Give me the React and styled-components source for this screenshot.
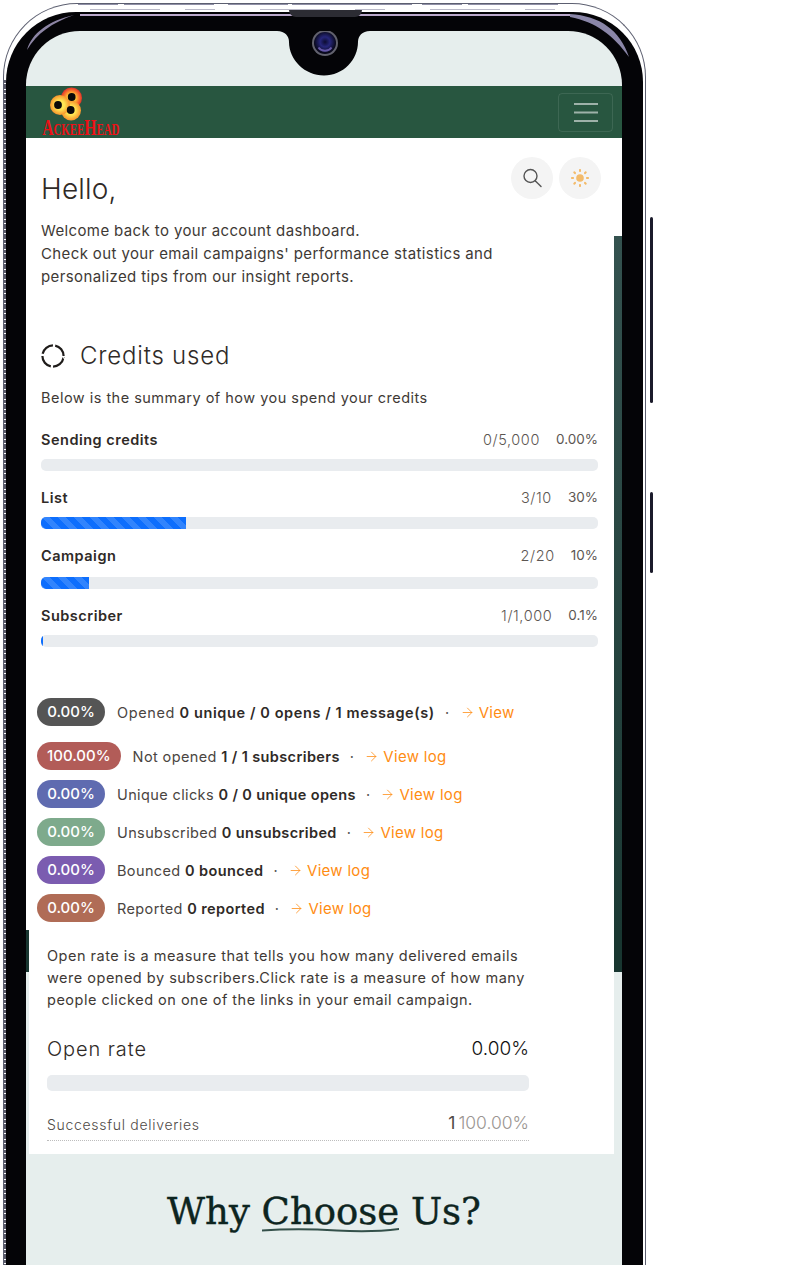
import React from "react";
import styled, { createGlobalStyle } from "styled-components";
import { ArrowRight } from "lucide-react";

const GlobalStyle = createGlobalStyle`
  html, body {
    margin: 0;
    padding: 0;
    background: #fff;
  }
  * {
    box-sizing: border-box;
  }
`;

const Page = styled.div`
  width: 800px;
  height: 1265px;
  padding: 3px 0 0 3px;
  overflow: hidden;
  background: #fff;
  font-family: Inter, "Liberation Sans", sans-serif;
  color: #2f2a27;
`;

const Shell = styled.div`
  position: relative;
  width: 643px;
  height: 1300px;
  padding: 8px 2px 0 2px;
  border: 1px solid #5c5f70;
  border-bottom: 0;
  border-radius: 74px 74px 0 0;
`;

const FrameLines = styled.svg`
  position: absolute;
  left: -1px;
  top: -1px;
  pointer-events: none;
`;

const Speaker = styled.div`
  position: absolute;
  left: 285px;
  top: 6px;
  width: 73px;
  height: 7px;
  background: #2c2c33;
  border-radius: 0 0 7px 7px;
`;

const SideButton = styled.div`
  position: absolute;
  left: 646px;
  top: ${(p) => p.$top}px;
  width: 3px;
  height: ${(p) => p.$height}px;
  background: #1b1b2b;
  border-radius: 2px;
`;

const Bezel = styled.div`
  height: 100%;
  padding: 19px 21px 0 20px;
  background: #040407;
  border-radius: 70px 70px 0 0;
`;

const Screen = styled.div`
  position: relative;
  width: 596px;
  height: 100%;
  overflow: hidden;
  background: #e6eeed;
  border-radius: 54px 54px 0 0;
`;

const Notch = styled.svg`
  position: absolute;
  left: 251px;
  top: 0;
`;

const StatusArea = styled.div`
  height: 55px;
`;

const Navbar = styled.nav`
  display: flex;
  align-items: center;
  justify-content: space-between;
  height: 52px;
  padding: 0 9px 0 15px;
  background: #285640;
`;

const Logo = styled.a`
  display: flex;
  flex-direction: column;
  align-items: center;
  width: 80px;
  height: 51px;
`;

const LogoMark = styled.svg`
  display: block;
  align-self: flex-start;
  margin-left: 9px;
  flex: none;
`;

const LogoText = styled.span`
  display: block;
  margin-top: -2px;
  font-family: "Liberation Serif", serif;
  font-size: 23px;
  line-height: 18px;
  font-weight: 700;
  font-variant: small-caps;
  color: #ee1016;
  white-space: nowrap;
  transform: scaleX(0.68);
`;

const Toggler = styled.button`
  display: flex;
  align-items: center;
  justify-content: center;
  width: 55px;
  height: 39px;
  padding: 0;
  background: transparent;
  border: 1px solid rgba(255, 255, 255, 0.1);
  border-radius: 4px;
`;

const Dashboard = styled.main`
  padding: 0 24px 8px 15px;
  background: linear-gradient(180deg, #34524f, #183630) right 98px / 8px 100% no-repeat, #fff;
`;

const Header = styled.header`
  display: flex;
  justify-content: space-between;
  padding-top: 19px;
`;

const Hello = styled.h1`
  margin: 12px 0 0;
  font-size: 28px;
  line-height: 40px;
  font-weight: 300;
  letter-spacing: 0.2px;
`;

const Actions = styled.div`
  display: flex;
  gap: 6px;
  margin-right: -3px;
`;

const RoundButton = styled.button`
  display: flex;
  align-items: center;
  justify-content: center;
  width: 42px;
  height: 42px;
  padding: 0;
  background: #f4f4f4;
  border: 0;
  border-radius: 50%;
`;

const Intro = styled.p`
  max-width: 500px;
  margin: 10px 0 0;
  font-size: 15px;
  line-height: 23px;
  letter-spacing: 0.38px;
  color: #3e3935;
`;

const SectionTitle = styled.h2`
  display: flex;
  align-items: center;
  gap: 15px;
  margin: 50px 0 0;
  font-size: 24px;
  line-height: 36px;
  font-weight: 300;
  letter-spacing: 0.8px;
`;

const Summary = styled.p`
  margin: 12px 0 20px;
  font-size: 14.5px;
  line-height: 23px;
  letter-spacing: 0.48px;
  color: #3e3935;
`;

const UsageRow = styled.div`
  margin-bottom: 16px;
`;

const UsageHead = styled.div`
  display: flex;
  align-items: center;
  height: 20px;
  margin-bottom: ${(p) => p.$gap}px;
`;

const UsageLabel = styled.strong`
  flex: 1;
  font-size: 14.5px;
  font-weight: 600;
  letter-spacing: 0.5px;
`;

const UsageCount = styled.span`
  font-size: 14.5px;
  font-weight: 300;
  letter-spacing: 0.6px;
  color: #5c5652;
`;

const UsagePercent = styled.span`
  margin-left: 16px;
  font-size: 13.5px;
  font-weight: 400;
  color: #5c5652;
`;

const Track = styled.div`
  height: ${(p) => p.$height || 12}px;
  overflow: hidden;
  background: #e9ecef;
  border-radius: 5px;
`;

const Fill = styled.div`
  height: 100%;
  background-color: #0d6efd;
  background-image: linear-gradient(
    45deg,
    rgba(255, 255, 255, 0.15) 25%,
    transparent 25%,
    transparent 50%,
    rgba(255, 255, 255, 0.15) 50%,
    rgba(255, 255, 255, 0.15) 75%,
    transparent 75%,
    transparent
  );
  background-size: 16px 16px;
`;

const Stats = styled.ul`
  display: flex;
  flex-direction: column;
  gap: 10px;
  margin: 51px 0 0 -4px;
  padding: 0;
  list-style: none;
`;

const StatRow = styled.li`
  display: flex;
  align-items: center;
  height: 28px;
  font-size: 14.5px;
  letter-spacing: 0.38px;
  color: #4a4541;
  white-space: nowrap;

  &:first-child {
    margin-bottom: 6px;
    letter-spacing: 0.6px;
  }

  b {
    font-weight: 600;
    color: #2f2a27;
  }
`;

const Badge = styled.span`
  min-width: 68px;
  height: 28px;
  margin-right: 12px;
  padding: 0 10px;
  text-align: center;
  font-size: 15px;
  line-height: 27px;
  font-weight: 500;
  letter-spacing: 0;
  color: #fff;
  background: ${(p) => p.$color};
  border-radius: 14px;
`;

const Dot = styled.span`
  margin: 0 10px;
  color: #555;
`;

const ViewLink = styled.a`
  display: inline-flex;
  align-items: center;
  gap: 4px;
  font-size: 15px;
  letter-spacing: 0.3px;
  color: #ff8c12;
`;

const NoteSection = styled.section`
  padding: 0 8px 0 3px;
  background: linear-gradient(#183630 42px, transparent 42px);
`;

const NoteCard = styled.div`
  padding: 15px 85px 13px 18px;
  background: #fff;
`;

const Note = styled.p`
  margin: 0;
  font-size: 14.5px;
  line-height: 22px;
  letter-spacing: 0.5px;
  color: #3e3935;
`;

const RateHead = styled.div`
  display: flex;
  align-items: center;
  justify-content: space-between;
  margin: 22px 0 10px;
  font-size: 20px;
  line-height: 32px;
  font-weight: 300;
  letter-spacing: 0.9px;
`;

const RateValue = styled.span`
  font-size: 19px;
  font-weight: 300;
  letter-spacing: 0;
  color: #111;
`;

const Delivery = styled.div`
  display: flex;
  justify-content: space-between;
  align-items: center;
  height: 37px;
  margin-top: 13px;
  border-bottom: 1px dotted #bdbdbd;
`;

const DeliveryLabel = styled.span`
  margin-top: 4px;
  font-size: 14px;
  font-weight: 300;
  letter-spacing: 0.7px;
  color: #4f4a46;
`;

const DeliveryValue = styled.span`
  font-size: 17.5px;
  font-weight: 300;
  color: #9a9591;

  b {
    margin-right: 3px;
    font-weight: 400;
    color: #4f4a46;
  }
`;

const WhySection = styled.section`
  padding-top: 35px;
  text-align: center;
`;

const WhyTitle = styled.h2`
  margin: 0;
  font-family: "DejaVu Serif", serif;
  font-size: 37px;
  line-height: 46px;
  font-weight: 400;
  color: #0d2420;
  -webkit-text-stroke: 0.4px #0d2420;
`;

const Underlined = styled.span`
  position: relative;
  display: inline-block;
`;

const Squiggle = styled.svg`
  position: absolute;
  left: 0;
  bottom: 2px;
  width: 100%;
  height: 5px;
`;

const usage = [
  { label: "Sending credits", count: "0/5,000", percent: "0.00%", fill: 0, gap: 10 },
  { label: "List", count: "3/10", percent: "30%", fill: 145, gap: 10 },
  { label: "Campaign", count: "2/20", percent: "10%", fill: 48, gap: 12 },
  { label: "Subscriber", count: "1/1,000", percent: "0.1%", fill: 2, gap: 10 },
];

const stats = [
  { value: "0.00%", color: "#555555", text: "Opened", bold: "0 unique / 0 opens / 1 message(s)", link: "View" },
  { value: "100.00%", color: "#b25c58", text: "Not opened", bold: "1 / 1 subscribers", link: "View log" },
  { value: "0.00%", color: "#5f6bb0", text: "Unique clicks", bold: "0 / 0 unique opens", link: "View log" },
  { value: "0.00%", color: "#7eaa8c", text: "Unsubscribed", bold: "0 unsubscribed", link: "View log" },
  { value: "0.00%", color: "#7b5cb0", text: "Bounced", bold: "0 bounced", link: "View log" },
  { value: "0.00%", color: "#b06c56", text: "Reported", bold: "0 reported", link: "View log" },
];

const sunRays = [0, 45, 90, 135, 180, 225, 270, 315];

const App = () => {
  return (
    <Page>
      <GlobalStyle />
      <Shell>
        <Bezel>
          <Screen>
            <StatusArea />
            <Navbar>
              <Logo>
                <LogoMark width="34" height="34" viewBox="0 0 34 34">
                  <defs>
                    <radialGradient id="lobeRed">
                      <stop offset="0.35" stopColor="#ffd23c" />
                      <stop offset="0.7" stopColor="#f9782c" />
                      <stop offset="1" stopColor="#e2302a" />
                    </radialGradient>
                    <radialGradient id="lobeYellow">
                      <stop offset="0.45" stopColor="#ffe653" />
                      <stop offset="1" stopColor="#f7932c" />
                    </radialGradient>
                  </defs>
                  <circle cx="21.500" cy="11" r="10.500" fill="url(#lobeRed)" />
                  <circle cx="21" cy="23.500" r="10" fill="url(#lobeYellow)" />
                  <circle cx="10" cy="18" r="10" fill="url(#lobeYellow)" />
                  <circle cx="21.700" cy="10" r="3.900" fill="#0a0a0a" />
                  <circle cx="8" cy="18" r="3.900" fill="#0a0a0a" />
                  <circle cx="20.700" cy="23" r="3.900" fill="#0a0a0a" />
                </LogoMark>
                <LogoText>AckeeHead</LogoText>
              </Logo>
              <Toggler aria-label="Menu">
                <svg width="26" height="20" viewBox="0 0 26 20">
                  <path d="M1 2h24M1 10.500h24M1 19h24" stroke="rgba(255,255,255,0.55)" strokeWidth="2" />
                </svg>
              </Toggler>
            </Navbar>
            <Dashboard>
              <Header>
                <Hello>Hello,</Hello>
                <Actions>
                  <RoundButton aria-label="Search">
                    <svg width="24" height="24" viewBox="0 0 24 24" fill="none" stroke="#555" strokeWidth="1.4">
                      <circle cx="10.500" cy="10" r="6.500" />
                      <path d="M15.200 14.700L21 20.500" strokeLinecap="round" />
                    </svg>
                  </RoundButton>
                  <RoundButton aria-label="Theme">
                    <svg width="24" height="24" viewBox="0 0 24 24">
                      <circle cx="12" cy="12" r="3.800" fill="#f3bb6b" />
                      {sunRays.map((angle) => (
                        <rect
                          key={angle}
                          x="11"
                          y="3"
                          width="2"
                          height="3"
                          rx="0.8"
                          fill="#f3bb6b"
                          transform={`rotate(${angle} 12 12)`}
                        />
                      ))}
                    </svg>
                  </RoundButton>
                </Actions>
              </Header>
              <Intro>
                Welcome back to your account dashboard.
                <br />
                Check out your email campaigns' performance statistics and personalized tips from our insight reports.
              </Intro>
              <SectionTitle>
                <svg width="24" height="24" viewBox="0 0 24 24" fill="none">
                  <circle
                    cx="12"
                    cy="12"
                    r="10.600"
                    stroke="#1f1c1a"
                    strokeWidth="2.200"
                    pathLength="100"
                    strokeDasharray="21.500 3.500"
                    transform="rotate(-78 12 12)"
                  />
                </svg>
                Credits used
              </SectionTitle>
              <Summary>Below is the summary of how you spend your credits</Summary>
              {usage.map((row) => (
                <UsageRow key={row.label}>
                  <UsageHead $gap={row.gap}>
                    <UsageLabel>{row.label}</UsageLabel>
                    <UsageCount>{row.count}</UsageCount>
                    <UsagePercent>{row.percent}</UsagePercent>
                  </UsageHead>
                  <Track>
                    <Fill style={{ width: row.fill }} />
                  </Track>
                </UsageRow>
              ))}
              <Stats>
                {stats.map((row) => (
                  <StatRow key={row.text}>
                    <Badge $color={row.color}>{row.value}</Badge>
                    <span>
                      {row.text} <b>{row.bold}</b>
                    </span>
                    <Dot>·</Dot>
                    <ViewLink>
                      <ArrowRight size={15} strokeWidth={1.25} />
                      {row.link}
                    </ViewLink>
                  </StatRow>
                ))}
              </Stats>
            </Dashboard>
            <NoteSection>
              <NoteCard>
                <Note>
                  Open rate is a measure that tells you how many delivered emails were opened by subscribers.Click rate
                  is a measure of how many people clicked on one of the links in your email campaign.
                </Note>
                <RateHead>
                  <span>Open rate</span>
                  <RateValue>0.00%</RateValue>
                </RateHead>
                <Track $height={16} />
                <Delivery>
                  <DeliveryLabel>Successful deliveries</DeliveryLabel>
                  <DeliveryValue>
                    <b>1</b>100.00%
                  </DeliveryValue>
                </Delivery>
              </NoteCard>
            </NoteSection>
            <WhySection>
              <WhyTitle>
                Why{" "}
                <Underlined>
                  Choose
                  <Squiggle viewBox="0 0 138 5" preserveAspectRatio="none">
                    <path d="M0 2.500C30 0.500 50 1 75 2.500S115 4 138 1" fill="none" stroke="#34504a" strokeWidth="2" />
                  </Squiggle>
                </Underlined>{" "}
                Us?
              </WhyTitle>
            </WhySection>
            <Notch width="94" height="45" viewBox="277 31 94 45">
              <defs>
                <radialGradient id="lens" cy="0.45">
                  <stop offset="0" stopColor="#0c0c30" />
                  <stop offset="0.45" stopColor="#26267a" />
                  <stop offset="1" stopColor="#08081a" />
                </radialGradient>
              </defs>
              <path
                d="M277 31H370C362 31 358 36 358 42C358 60 343 75.500 324 75.500C305 75.500 289 60 289 42C289 36 285 31 277 31Z"
                fill="#040407"
              />
              <circle cx="325" cy="43" r="13" fill="#62626e" />
              <circle cx="325" cy="43" r="11" fill="url(#lens)" />
              <path d="M318.500 47.500A8 8 0 0 0 331.500 47.500" fill="none" stroke="#6558a8" strokeWidth="2" />
            </Notch>
          </Screen>
        </Bezel>
        <FrameLines width="643" height="1265" viewBox="3 3 643 1265" fill="none">
          <path d="M78 4.500H572" stroke="#8f8fa6" strokeWidth="1" strokeDasharray="40 6 90 14 60 4 120 10" />
          <path d="M90 9.500H560" stroke="#b9b9c8" strokeWidth="1" strokeDasharray="70 25 30 45" />
          <path d="M80 15H570" stroke="#bba9cc" strokeWidth="2" />
          <path d="M27 50C32 33 48 21 74 15C52 23 37 33 27 50Z" fill="#8d85a5" />
          <path d="M570 14C600 16 620 30 629 57C613 35 596 22 570 17Z" fill="#8a86a8" />
          <path d="M5 80V1265" stroke="#24263a" strokeWidth="1.500" strokeDasharray="3 1 5 1" />
        </FrameLines>
        <Speaker />
        <SideButton $top={213} $height={186} />
        <SideButton $top={488} $height={81} />
      </Shell>
    </Page>
  );
};

export default App;
